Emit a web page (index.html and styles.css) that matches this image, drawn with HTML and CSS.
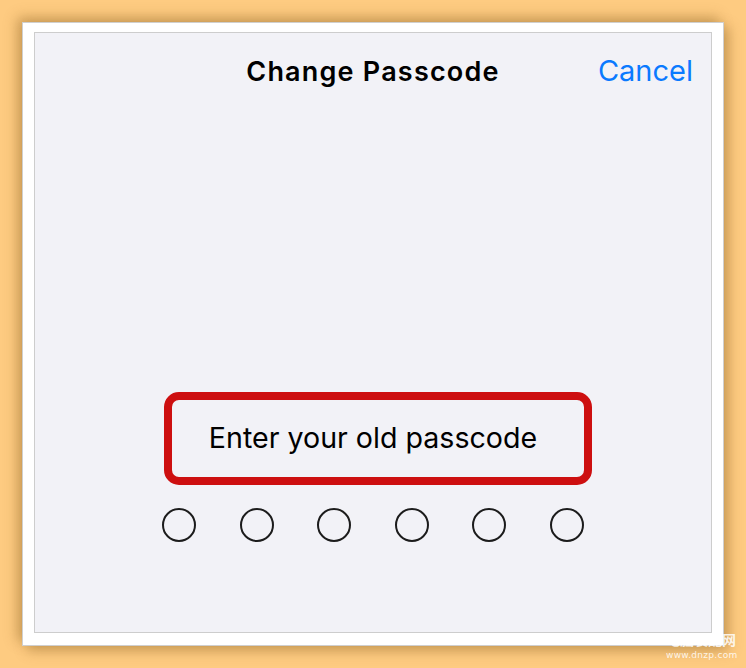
FILE: index.html
```html
<!DOCTYPE html>
<html lang="en">
<head>
    <meta charset="UTF-8">
    <meta name="viewport" content="width=device-width, initial-scale=1.0">
    <title>Change Passcode</title>
    <link rel="stylesheet" href="styles.css">
</head>
<body>
    <div class="photo-frame">
        <div class="phone-screen">
            <div class="nav-bar">
                <span></span>
                <span class="nav-title">Change Passcode</span>
                <span class="nav-cancel">Cancel</span>
            </div>
            <div class="passcode-area">
                <div class="prompt-row">
                    <span class="prompt">
                        Enter your old passcode
                        <!-- red highlight drawn over the screenshot -->
                        <span class="highlight"></span>
                    </span>
                </div>
                <div class="dots">
                    <span class="dot"></span>
                    <span class="dot"></span>
                    <span class="dot"></span>
                    <span class="dot"></span>
                    <span class="dot"></span>
                    <span class="dot"></span>
                </div>
            </div>
        </div>
    </div>

    <div class="watermark">
        <div class="watermark-name">电脑装配网</div>
        <div class="watermark-url">www.dnzp.com</div>
    </div>
</body>
</html>
```

FILE: styles.css
```css
body {
    margin: 0;
    padding: 22px;
    height: 668px;
    box-sizing: border-box;
    background-color: #fecb81;
    font-family: Inter, "Liberation Sans", Arial, sans-serif;
    position: relative;
    overflow: hidden;
}
.photo-frame {
    width: 702px;
    height: 624px;
    box-sizing: border-box;
    background-color: #fff;
    border: 1px solid #cfcfcf;
    padding: 9px 11px 12px 11px;
    box-shadow: -5px -5px 12px rgba(120, 80, 20, 0.35), 5px 5px 12px rgba(120, 80, 20, 0.35);
}
.phone-screen {
    height: 100%;
    box-sizing: border-box;
    background-color: #f2f2f7;
    border: 1px solid #cdcdcd;
    display: flex;
    flex-direction: column;
}
.nav-bar {
    display: grid;
    grid-template-columns: 1fr auto 1fr;
    align-items: baseline;
    padding: 22px 18px 0 18px;
}
.nav-title {
    font-size: 27px;
    font-weight: 600;
    letter-spacing: 1.2px;
    line-height: 32px;
    color: #000;
}
.nav-cancel {
    justify-self: end;
    font-size: 29px;
    line-height: 32px;
    color: #0a7aff;
}
.passcode-area {
    flex-grow: 1;
    display: flex;
    flex-direction: column;
    justify-content: flex-end;
    align-items: center;
    padding-bottom: 90px;
}
.prompt-row {
    text-align: center;
    margin-bottom: 52px;
}
.prompt {
    position: relative;
    font-size: 28.6px;
    line-height: 36px;
    color: #000;
}
.highlight {
    position: absolute;
    left: -45px;
    right: -55px;
    top: -28px;
    bottom: -30px;
    border: 8px solid #cd0f10;
    border-radius: 15px;
}
.dots {
    display: flex;
    gap: 43.5px;
}
.dot {
    width: 34px;
    height: 34px;
    box-sizing: border-box;
    border: 2px solid #1c1c1c;
    border-radius: 50%;
}
.watermark {
    position: absolute;
    right: 10px;
    top: 631px;
    width: 70px;
    color: rgba(255, 255, 255, 0.85);
    text-align: center;
}
.watermark-name {
    font-family: "Noto Sans CJK SC", sans-serif;
    font-size: 14px;
    line-height: 16px;
    font-weight: 700;
}
.watermark-url {
    font-family: "DejaVu Sans", sans-serif;
    font-size: 9px;
    line-height: 12px;
    letter-spacing: 0.3px;
    margin-top: 2px;
    white-space: nowrap;
}
```
